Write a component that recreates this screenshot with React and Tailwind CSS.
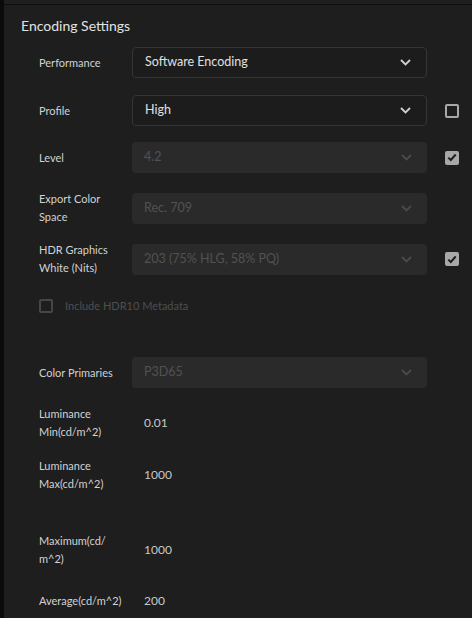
import React from "react";

function Chevron({ dim }) {
  return (
    <svg width="11" height="7" viewBox="0 0 11 7" className="shrink-0">
      <path d="M1 1 L5.5 5.5 L10 1" fill="none" stroke={dim ? "#4a4a4a" : "#d0d0d0"} strokeWidth="1.8" />
    </svg>
  );
}

function Select({ value, dim }) {
  return (
    <div
      className={
        "w-[295px] h-[31px] rounded-[4px] flex items-center justify-between pl-[12px] pr-[15px] " +
        (dim ? "bg-[#2a2a2a]" : "bg-[#1c1c1c] border border-[#353535]")
      }
    >
      <span className={dim ? "text-[12.5px] text-[#525252]" : "text-[12.5px] text-[#e0e0e0]"}>{value}</span>
      <Chevron dim={dim} />
    </div>
  );
}

function Check({ checked, dim }) {
  if (checked)
    return (
      <div className="w-[14px] h-[14px] rounded-[2px] bg-[#a8a8a8] flex items-center justify-center">
        <svg width="10" height="9" viewBox="0 0 10 9">
          <path d="M1.3 4.6 L3.8 7 L8.7 1.5" fill="none" stroke="#1e1e1e" strokeWidth="2" />
        </svg>
      </div>
    );
  return (
    <div
      className={
        "w-[14px] h-[14px] rounded-[2px] border-2 " + (dim ? "border-[#464646]" : "border-[#a8a8a8]")
      }
    />
  );
}

function Label({ children }) {
  return <div className="w-[93px] shrink-0 text-[11px] leading-[18px] text-[#d2d2d2]">{children}</div>;
}

function Row({ label, children, right, className = "" }) {
  return (
    <div className={"flex items-center " + className}>
      <Label>{label}</Label>
      {children}
      {right !== undefined && <div className="ml-[18px] w-[14px]">{right}</div>}
    </div>
  );
}

export default function App() {
  return (
    <div
      className="w-[472px] h-[618px] bg-[#1e1e1e] overflow-hidden flex"
      style={{ fontFamily: "Lato, 'Open Sans', sans-serif" }}
    >
      <div className="w-[4px] shrink-0 bg-[#0b0b0b]" />
      <div className="flex-1 flex flex-col">
        <div className="h-[4px] bg-[#1f1f1f]" />
        <div className="h-[1px] bg-[#0f0f0f]" />
        <div className="pl-[17px] mt-[11px] text-[14px] leading-[20px] text-[#e2e2e2]">Encoding Settings</div>
        <div className="pl-[35px] flex flex-col">
          <Row label="Performance" className="mt-[11px]">
            <Select value="Software Encoding" />
          </Row>
          <Row label="Profile" className="mt-[17px]" right={<Check />}>
            <Select value="High" />
          </Row>
          <Row label="Level" className="mt-[16px]" right={<Check checked />}>
            <Select value="4.2" dim />
          </Row>
          <Row label={<>Export Color<br />Space</>} className="mt-[17px]">
            <Select value="Rec. 709" dim />
          </Row>
          <Row label={<>HDR Graphics<br />White (Nits)</>} className="mt-[15px]" right={<Check checked />}>
            <Select value="203 (75% HLG, 58% PQ)" dim />
          </Row>
          <div className="flex items-center mt-[20px] h-[18px]">
            <Check dim />
            <span className="ml-[12px] text-[11px] text-[#4e4e4e]">Include HDR10 Metadata</span>
          </div>
          <Row label="Color Primaries" className="mt-[42px]">
            <Select value="P3D65" dim />
          </Row>
          <Row label={<>Luminance<br />Min(cd/m^2)</>} className="mt-[17px]">
            <span className="ml-[12px] text-[12px] text-[#c8c8c8]">0.01</span>
          </Row>
          <Row label={<>Luminance<br />Max(cd/m^2)</>} className="mt-[16px]">
            <span className="ml-[12px] text-[12px] text-[#c8c8c8]">1000</span>
          </Row>
          <Row label={<>Maximum(cd/<br />m^2)</>} className="mt-[39px]">
            <span className="ml-[12px] text-[12px] text-[#c8c8c8]">1000</span>
          </Row>
          <Row label="Average(cd/m^2)" className="mt-[24px]">
            <span className="ml-[12px] text-[12px] text-[#c8c8c8]">200</span>
          </Row>
        </div>
      </div>
    </div>
  );
}
